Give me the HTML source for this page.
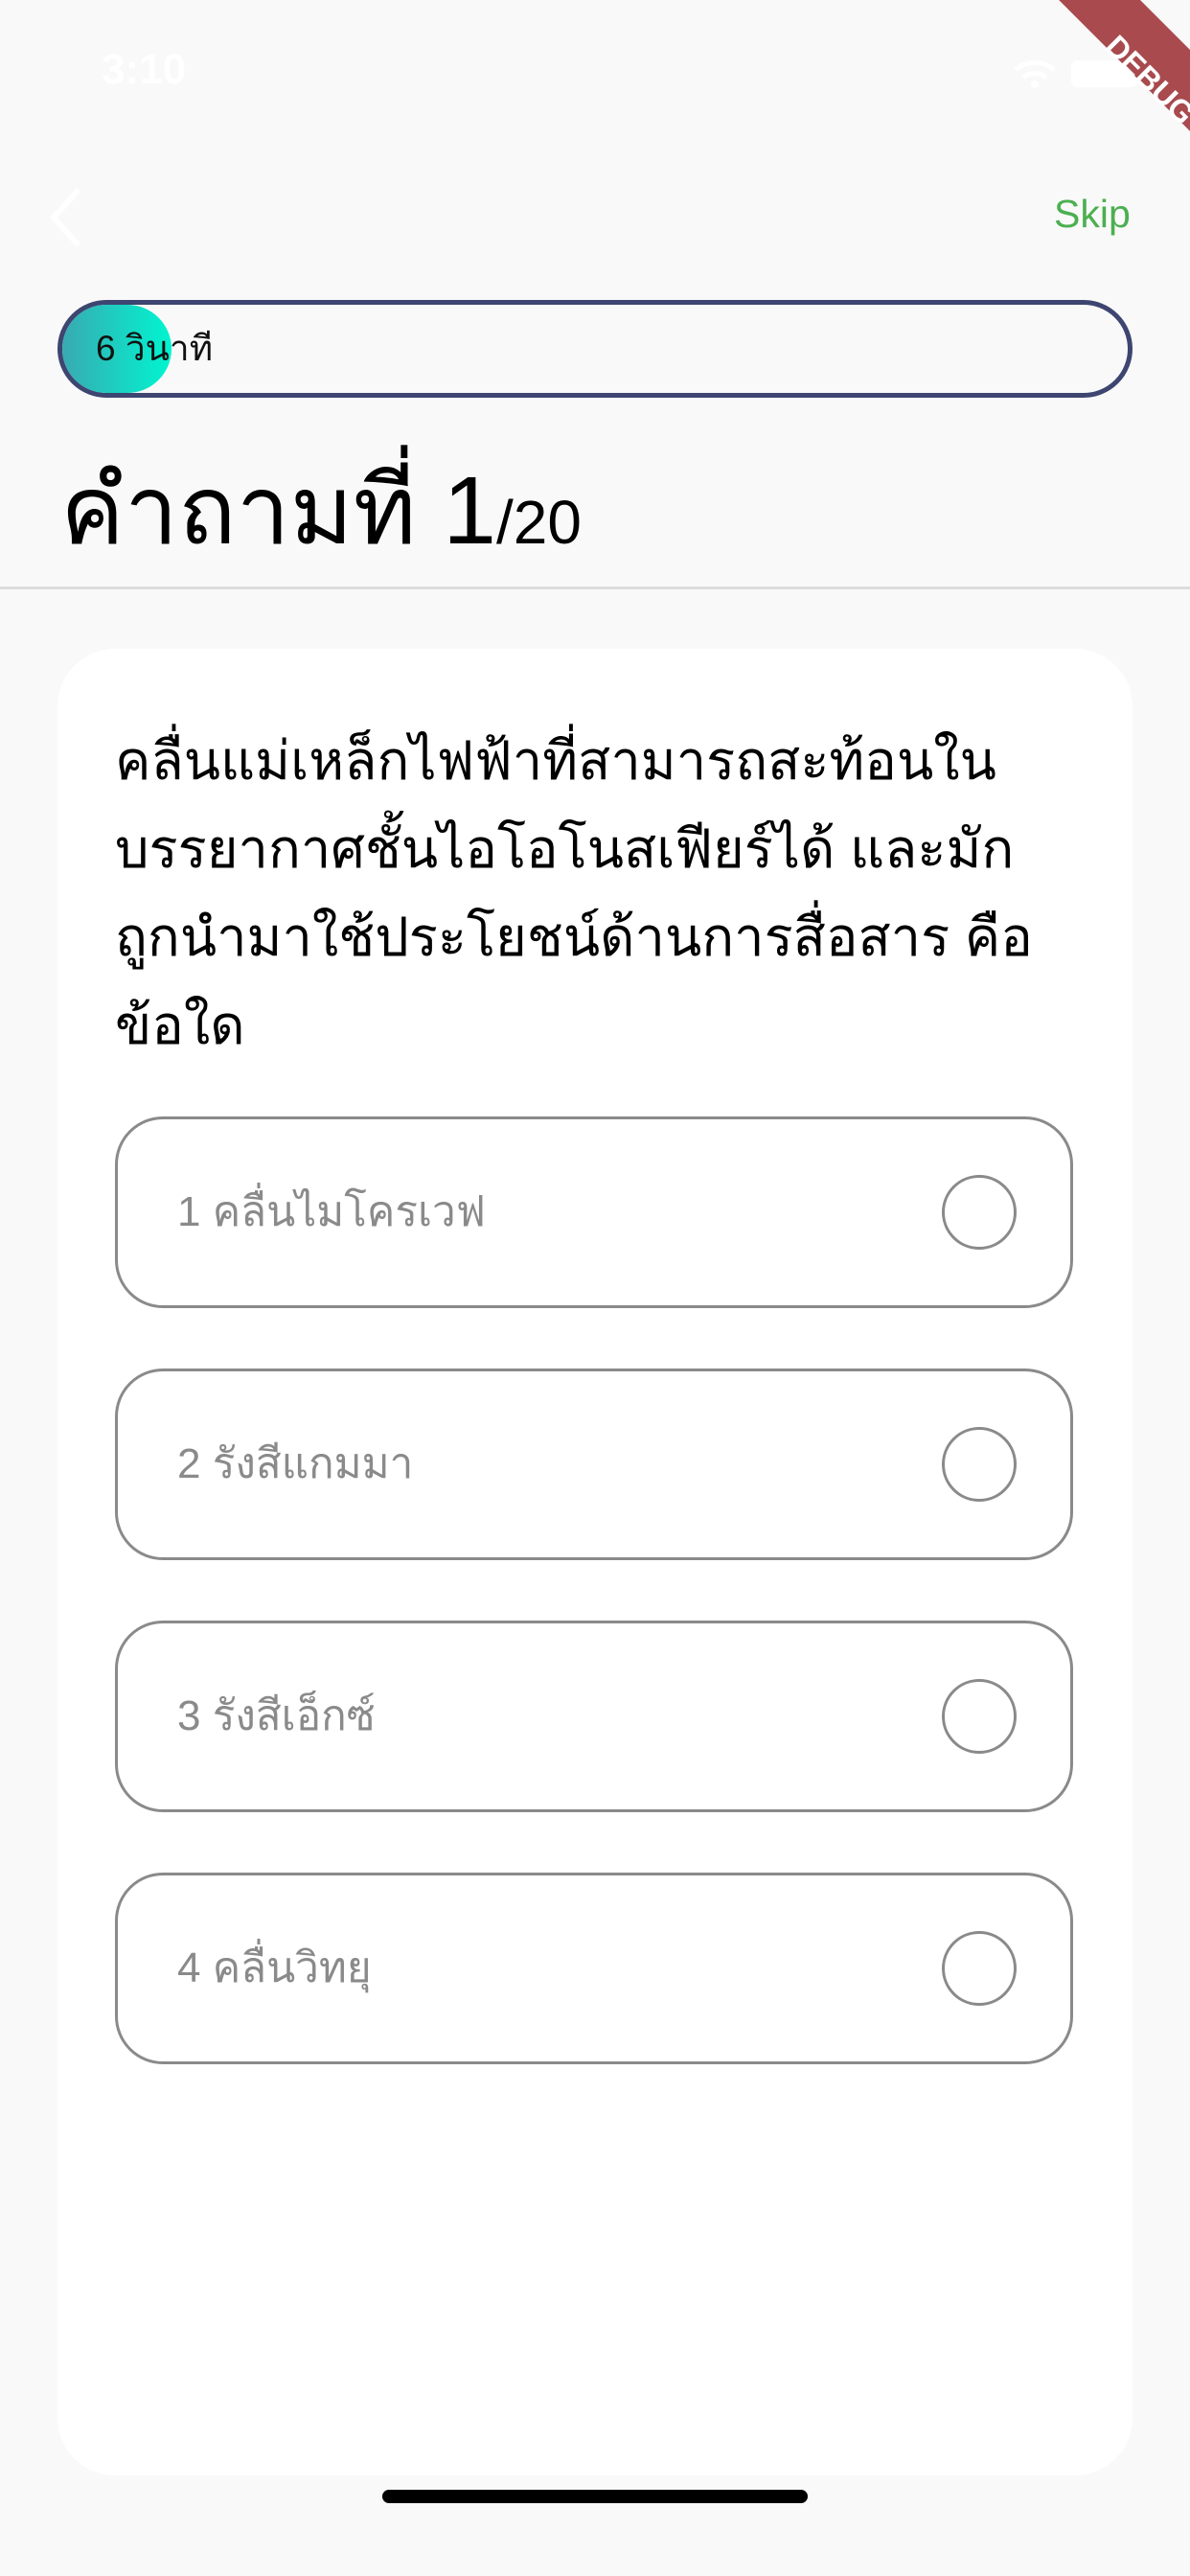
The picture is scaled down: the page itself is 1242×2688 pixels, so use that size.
<!DOCTYPE html>
<html><head><meta charset="utf-8"><style>
*{margin:0;padding:0;box-sizing:border-box}
body{width:1242px;height:2688px;background:#f9f9f9;position:relative;overflow:hidden;font-family:"Liberation Sans","DejaVu Sans",sans-serif}
.abs{position:absolute}
.opt{position:absolute;left:120px;width:1000px;height:200px;border:3px solid #8a8a8a;border-radius:50px;background:#fff}
.opt span{position:absolute;left:62px;top:70px;font-size:44px;line-height:54px;color:#8a8a8a;white-space:nowrap}
.opt i{position:absolute;left:860px;top:58px;width:78px;height:78px;border:3px solid #8a8a8a;border-radius:50%}
</style></head><body>
<div class="abs" style="left:106px;top:48px;font-size:44px;color:#fff;font-weight:bold">3:10</div>
<svg class="abs" style="left:1050px;top:55px" width="160" height="40"><path d="M10 18a30 30 0 0 1 40 0M18 26a18 18 0 0 1 24 0" stroke="#fff" stroke-width="5" fill="none"/><circle cx="30" cy="33" r="4" fill="#fff"/><rect x="68" y="8" width="70" height="28" rx="7" fill="#fff"/></svg>
<div class="abs" style="width:360px;height:60px;background:#a84a4e;transform:rotate(45deg);transform-origin:0 0;left:1120px;top:-70px"></div>
<div class="abs" style="left:1080px;top:65px;width:240px;color:#fff;font-weight:bold;font-size:32px;text-align:center;transform:rotate(45deg)">DEBUG</div>
<svg class="abs" style="left:44px;top:192px" width="50" height="70"><path d="M38 6L12 35L38 64" stroke="#fff" stroke-width="6" fill="none"/></svg>
<div class="abs" style="left:1100px;top:200px;font-size:41px;color:#4caf50">Skip</div>
<div class="abs" style="left:60px;top:313px;width:1122px;height:102px;border:5px solid #3d4570;border-radius:51px;overflow:hidden">
<div class="abs" style="left:-2px;top:0;width:116px;height:92px;border-radius:0 46px 46px 0;background:linear-gradient(90deg,#3aa8b0,#00f5d0)"></div>
<div class="abs" style="left:35px;top:24px;font-size:37px;line-height:44px;color:#111;white-space:nowrap">6 วินาที</div>
</div>
<div class="abs" style="left:63px;top:478px;font-size:100px;line-height:110px;color:#000;white-space:nowrap">คำถามที่ 1<span style="font-size:64px">/20</span></div>
<div class="abs" style="left:0;top:612px;width:1242px;height:3px;background:#ddd"></div>
<div class="abs" style="left:60px;top:677px;width:1122px;height:1906px;background:#fff;border-radius:60px"></div>
<div class="abs" style="left:120px;top:748px;width:1100px;font-size:56px;line-height:92px;color:#000;white-space:nowrap">คลื่นแม่เหล็กไฟฟ้าที่สามารถสะท้อนใน<br>บรรยากาศชั้นไอโอโนสเฟียร์ได้ และมัก<br>ถูกนำมาใช้ประโยชน์ด้านการสื่อสาร คือ<br>ข้อใด</div>
<div class="opt" style="top:1165px"><span>1 คลื่นไมโครเวฟ</span><i></i></div>
<div class="opt" style="top:1428px"><span>2 รังสีแกมมา</span><i></i></div>
<div class="opt" style="top:1691px"><span>3 รังสีเอ็กซ์</span><i></i></div>
<div class="opt" style="top:1954px"><span>4 คลื่นวิทยุ</span><i></i></div>
<div class="abs" style="left:399px;top:2598px;width:444px;height:14px;border-radius:7px;background:#000"></div>
</body></html>
